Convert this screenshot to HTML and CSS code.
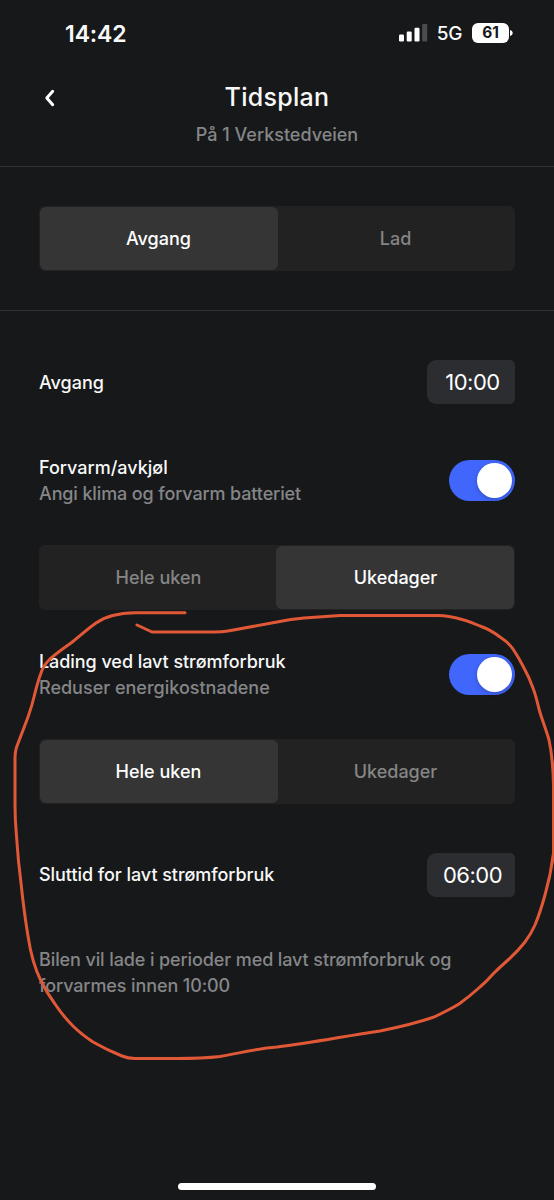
FILE: index.html
```html
<!DOCTYPE html>
<html lang="nb">
<head>
<meta charset="utf-8">
<title>Tidsplan</title>
<link rel="stylesheet" href="styles.css">
</head>
<body>
<main class="screen">
  <div class="status">
    <span class="clock">14:42</span>
    <div class="status-icons">
      <svg class="signal" width="29" height="18" viewBox="0 0 29 18"><rect x="0" y="10.500" width="5" height="7" rx="1.200"/><rect x="7.700" y="7.500" width="5" height="10" rx="1.200"/><rect x="15.500" y="3.700" width="5" height="13.800" rx="1.200"/><rect class="weak" x="23.200" y="0" width="5" height="17.500" rx="1.200"/></svg>
      <span class="network">5G</span>
      <div class="battery"><span class="level">61</span><svg width="4" height="8" viewBox="0 0 4 8"><path d="M1 1C4.600 2.200 4.600 5.800 1 7Z"/></svg></div>
    </div>
  </div>
  <header class="header">
    <svg class="back" width="12" height="20" viewBox="0 0 12 20"><path d="M9.700 3.300 3.800 10l5.900 6.700"/></svg>
    <h1 class="title">Tidsplan</h1>
    <p class="subtitle">På 1 Verkstedveien</p>
  </header>
  <section class="mode">
    <div class="segments"><div class="segment active">Avgang</div><div class="segment">Lad</div></div>
  </section>
  <section class="settings">
    <div class="row time-row"><span class="label">Avgang</span><span class="time">10:00</span></div>
    <div class="row switch-row">
      <div><div class="label">Forvarm/avkjøl</div><div class="hint climate">Angi klima og forvarm batteriet</div></div>
      <div class="switch"><div class="knob"></div></div>
    </div>
    <div class="segments"><div class="segment">Hele uken</div><div class="segment active end">Ukedager</div></div>
    <div class="row switch-row second">
      <div><div class="label offpeak">Lading ved lavt strømforbruk</div><div class="hint">Reduser energikostnadene</div></div>
      <div class="switch"><div class="knob"></div></div>
    </div>
    <div class="segments"><div class="segment active">Hele uken</div><div class="segment">Ukedager</div></div>
    <div class="row time-row last"><span class="label offpeak">Sluttid for lavt strømforbruk</span><span class="time">06:00</span></div>
    <p class="hint note">Bilen vil lade i perioder med lavt strømforbruk og<br>forvarmes innen 10:00</p>
  </section>
  <div class="home"></div>
  <svg class="markup" width="554" height="1200" viewBox="0 0 554 1200"><path d="M185 612.700H135Q110 613 96 623C86 630 79 637 71 643Q58 652 50 659Q43 666 41 673Q38 681 35 693Q32 706 28 717C24 728 20 738 17 746Q15 751 15 759V805Q15 820 16.500 836Q18 860 21 883Q24 912 28 936Q32 963 41 981Q47 993 55 1004Q63 1016 73 1026Q81 1034 93 1042Q107 1050 122 1056Q128 1058.500 135 1058.500H177Q203 1058.500 220 1056.500C240 1053 257 1048.500 277 1047C312 1043 345 1036 380 1031Q414 1024 434 1017Q449 1010 459 1004Q470 996 480 987Q487 981 493 974Q500 967 508 960Q518 951 525 942Q531 934 535 925Q540 913 545 895Q551 874 553.500 853V785Q553 758 549 740C546 729 542 720 539 709Q536 696 533 688Q529 677 524 668C520 660 517 655 513 649Q508 642 500 637Q491 630 480 626Q464 619 449 616.500Q444 615.500 437 615.500H340L304 618Q291 619 277 622L228 631Q222 632 215 632H152L137 625"/></svg>
</main>
</body>
</html>
```
FILE: styles.css
```css
* { box-sizing: border-box; }
body { margin: 0; background: #17181a; }
.screen {
  position: relative;
  display: flex;
  flex-direction: column;
  width: 554px;
  height: 1200px;
  overflow: hidden;
  background: #17181a;
  color: #f8f8f8;
  font: 500 18px/26px Inter, "Liberation Sans", sans-serif;
}
.status {
  display: flex;
  justify-content: space-between;
  align-items: flex-start;
  height: 68px;
  padding: 20px 42px 0 65px;
}
.clock { padding-top: 1px; font-size: 23px; font-weight: 600; letter-spacing: -.1px; }
.status-icons { display: flex; align-items: center; margin-top: -1px; }
.signal { display: block; margin-right: 9px; fill: #fff; }
.signal .weak { fill: #4b4c4e; }
.network { padding-top: 2px; font-size: 19px; letter-spacing: -.4px; margin-right: 10px; }
.battery { display: flex; align-items: center; margin-right: -1px; fill: #fff; }
.level {
  width: 37px;
  height: 20px;
  border-radius: 6px;
  background: #fff;
  color: #17181a;
  font-size: 15.500px;
  font-weight: 700;
  line-height: 20px;
  text-align: center;
}
.header {
  position: relative;
  height: 99px;
  padding-top: 13px;
  border-bottom: 1px solid #333436;
  text-align: center;
}
.back {
  position: absolute;
  left: 43px;
  top: 20px;
  fill: none;
  stroke: #fff;
  stroke-width: 3;
  stroke-linecap: round;
  stroke-linejoin: round;
}
.title { margin: 0; font-size: 25px; font-weight: 500; line-height: 32px; letter-spacing: .3px; }
.subtitle { margin: 8px 0 0; padding-top: 1px; color: #858688; }
.mode { height: 144px; padding: 39px 39px 0; border-bottom: 1px solid #333436; }
.segments {
  display: flex;
  height: 65px;
  padding: 1px;
  border-radius: 6px;
  background: #222;
}
.segment {
  flex: 1;
  display: flex;
  justify-content: center;
  align-items: center;
  border-radius: 6px;
  color: #858585;
}
.segment.active { margin-right: -1px; padding-right: 1px; background: #353535; color: #fff; }
.segment.active.end { margin: 0 0 0 -1px; padding: 0 0 0 1px; }
.settings { padding: 49px 39px 0; }
.row { display: flex; justify-content: space-between; align-items: center; }
.time {
  width: 88px;
  height: 44px;
  padding-left: 3px;
  border-radius: 9px 5px 5px 9px;
  background: #2c2d31;
  color: #fff;
  font-size: 22px;
  font-weight: 400;
  line-height: 44px;
  letter-spacing: -.5px;
  text-align: center;
}
.label { padding-top: 1px; }
.switch-row { margin: 50px 0 38px; }
.switch-row.second { margin-top: 38px; }
.offpeak { letter-spacing: -.06px; }
.last .label { padding-top: 0; }
.hint { color: #858688; }
.climate { letter-spacing: -.13px; }
.switch { width: 66px; height: 41px; padding: 3px; border-radius: 21px; background: #4066fb; }
.knob { width: 35px; height: 35px; margin-left: auto; border-radius: 50%; background: #fff; box-shadow: 0 2px 5px #0003; }
.last { margin-top: 49px; }
.note { margin: 50px -20px 0 0; letter-spacing: -.11px; }
.home {
  width: 198px;
  height: 7px;
  margin: auto auto 10px 178px;
  border-radius: 4px;
  background: #fff;
}
.markup {
  position: absolute;
  inset: 0;
  fill: none;
  stroke: #e15837;
  stroke-width: 3;
  stroke-linecap: round;
  stroke-linejoin: round;
}
```
